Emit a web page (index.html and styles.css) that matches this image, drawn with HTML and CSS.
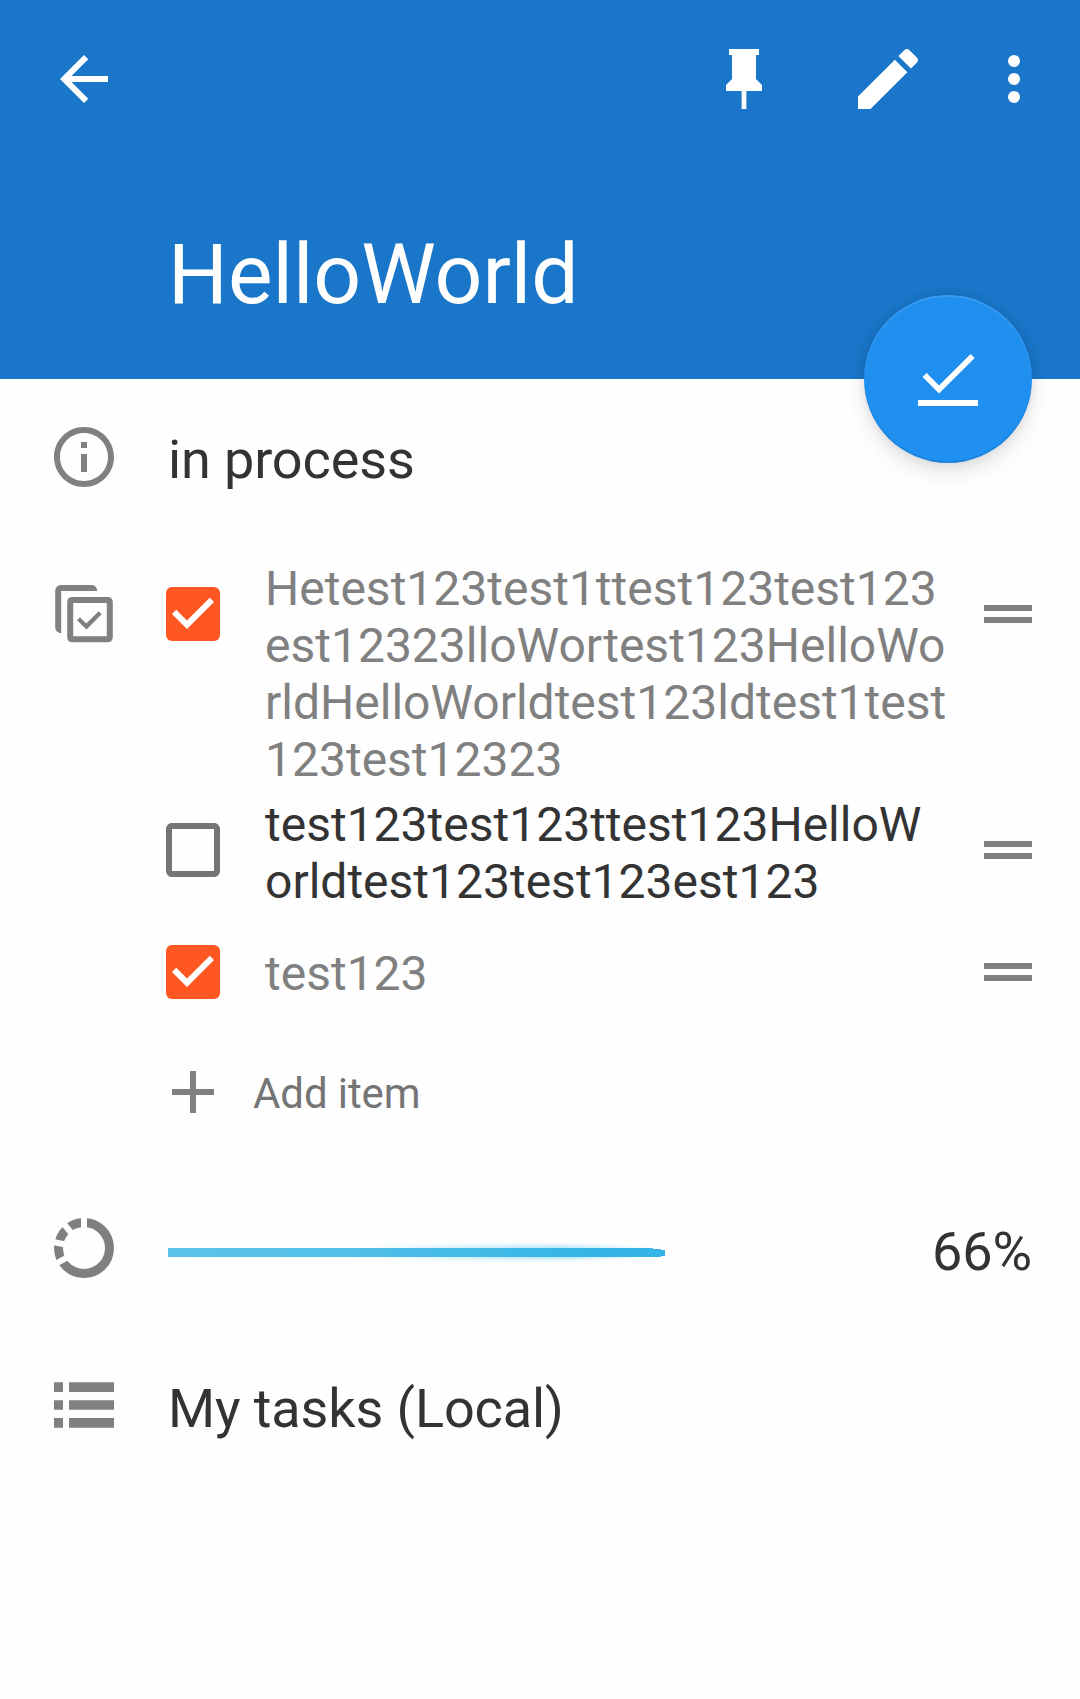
FILE: index.html
```html
<!DOCTYPE html>
<html lang="en">
<head>
<meta charset="utf-8">
<title>HelloWorld</title>
<link rel="stylesheet" href="styles.css">
</head>
<body>
<header class="header">
  <nav class="toolbar">
    <svg class="icon" viewBox="0 0 24 24"><path d="M20 11H7.83l5.59-5.59L12 4l-8 8 8 8 1.41-1.41L7.83 13H20z"/></svg>
    <div class="actions">
      <svg class="icon" viewBox="0 0 24 24"><path d="M16 12V4h1V2H7v2h1v8l-2 2v2h5.2v6h1.6v-6H18v-2z"/></svg>
      <svg class="icon icon-edit" viewBox="0 0 24 24"><path d="M3 17.25V21h3.75L17.81 9.94l-3.75-3.75zM20.71 7.04c.39-.39.39-1.02 0-1.41l-2.34-2.34c-.39-.39-1.02-.39-1.41 0l-1.83 1.83 3.75 3.75z"/></svg>
      <svg class="icon" viewBox="0 0 24 24"><circle cx="12" cy="6" r="2"/><circle cx="12" cy="12" r="2"/><circle cx="12" cy="18" r="2"/></svg>
    </div>
  </nav>
  <h1 class="title">HelloWorld</h1>
  <button class="fab" aria-label="Complete">
    <svg class="icon" viewBox="0 0 24 24"><path d="M19.55 3.67 9 14.2 4.87 10 3.53 11.33 9 16.87 20.9 5zM2 19h20v2H2z"/></svg>
  </button>
</header>
<main>
  <section class="row status">
    <svg class="icon" viewBox="0 0 24 24"><path d="M11 17h2v-6h-2zm1-15C6.48 2 2 6.48 2 12s4.48 10 10 10 10-4.48 10-10S17.52 2 12 2zm0 18c-4.41 0-8-3.59-8-8s3.59-8 8-8 8 3.59 8 8-3.59 8-8 8zM11 9h2V7h-2z"/></svg>
    <p class="text">in process</p>
  </section>
  <section class="row checklist">
    <svg class="icon" viewBox="0 0 24 24"><path d="M4.400 18.350C3.300 18.350 2.400 17.500 2.400 16.400V4.300C2.400 3.200 3.300 2.330 4.400 2.330H14.500C15.600 2.330 16.400 3.200 16.400 4.330H4.400z"/><path class="outline" d="M8.200 7.350h11.600q.8 0 .8.8v11.500q0 .8-.8.8H8.200q-.8 0-.8-.8V8.150q0-.8.8-.8z"/><path d="m10.650 13.650 2.100 2.100 4.100-4.100 1.050 1.050-5.050 5.050-3.200-3.100z" transform="translate(0 -.6)"/></svg>
    <ul class="items">
      <li class="item done">
        <svg class="icon" viewBox="0 0 24 24"><rect class="box" x="3" y="3" width="18" height="18" rx="2"/><path class="tick" d="m10 17-5-5 1.410-1.410L10 14.170l7.590-7.590L19 8z"/></svg>
        <p class="label">Hetest123test1ttest123test123<br>est12323lloWortest123HelloWo<br>rldHelloWorldtest123ldtest1test<br>123test12323</p>
        <span class="handle"></span>
      </li>
      <li class="item">
        <svg class="icon empty" viewBox="0 0 24 24"><path d="M19 5v14H5V5zm0-2H5c-1.100 0-2 .9-2 2v14c0 1.100.9 2 2 2h14c1.100 0 2-.9 2-2V5c0-1.100-.9-2-2-2z"/></svg>
        <p class="label">test123test123ttest123HelloW<br>orldtest123test123est123</p>
        <span class="handle"></span>
      </li>
      <li class="item done">
        <svg class="icon" viewBox="0 0 24 24"><rect class="box" x="3" y="3" width="18" height="18" rx="2"/><path class="tick" d="m10 17-5-5 1.410-1.410L10 14.170l7.590-7.590L19 8z"/></svg>
        <p class="label">test123</p>
        <span class="handle"></span>
      </li>
      <li class="add">
        <svg class="icon" viewBox="0 0 24 24"><path d="M19 13h-6v6h-2v-6H5v-2h6V5h2v6h6z"/></svg>
        <span class="add-label">Add item</span>
      </li>
    </ul>
  </section>
  <section class="row progress">
    <svg class="icon" viewBox="0 0 24 24"><circle class="ring" cx="12" cy="12" r="8.5"/><path class="gaps" d="M12 12V1M12 12 4.800 3.400M12 12 1.200 9.900M12 12 2.400 17.400"/></svg>
    <div class="track"><svg class="bar" viewBox="0 0 497 25">
      <defs>
        <linearGradient id="fill"><stop offset="0" stop-color="#5bc3ea"/><stop offset=".3" stop-color="#55c0e9"/><stop offset=".85" stop-color="#35b5e5"/><stop offset="1" stop-color="#35b5e5"/></linearGradient>
        <linearGradient id="glow"><stop offset="0" stop-color="#6fd0f5" stop-opacity="0"/><stop offset=".7" stop-color="#6fd0f5" stop-opacity=".6"/><stop offset="1" stop-color="#6fd0f5" stop-opacity=".4"/></linearGradient>
        <filter id="soft" x="-5%" y="-100%" width="110%" height="300%"><feGaussianBlur stdDeviation="2"/></filter>
      </defs>
      <path d="M180 7C300 5 430 4 485 11V14C430 21 300 20 180 18z" fill="url(#glow)" filter="url(#soft)"/>
      <path d="M0 8H485V9H493V10H497V16H493V17H0z" fill="url(#fill)"/>
    </svg></div>
    <span class="text">66%</span>
  </section>
  <section class="row list">
    <svg class="icon" viewBox="0 0 24 24"><path d="M2 4.430h3v3.200H2zM7 4.430h15v3.200H7zM2 10.400h3v3.200H2zM7 10.400h15v3.200H7zM2 16.370h3v3.200H2zM7 16.370h15v3.200H7z"/></svg>
    <p class="text">My tasks (Local)</p>
  </section>
</main>
</body>
</html>
```
FILE: styles.css
```css
* { box-sizing: border-box; margin: 0; padding: 0; }

body {
  width: 1080px;
  min-height: 1699px;
  background: #fefefe;
  color: #333;
  font-family: Roboto, sans-serif;
}

.icon { display: block; flex: none; width: 72px; height: 72px; fill: #808080; }

.header {
  position: relative;
  height: 379px;
  padding: 39px 30px 0 48px;
  background: #1976c8;
}
.header .icon { fill: #fff; }
.toolbar { display: flex; justify-content: space-between; align-items: center; height: 80px; }
.actions { display: flex; align-items: center; }
.actions .icon-edit { width: 80px; height: 80px; margin: 0 50px 0 68px; }
.title {
  margin: 107px 0 0 120px;
  color: #fff;
  font-size: 84px;
  font-weight: 400;
  line-height: 98px;
}
.fab {
  position: absolute;
  right: 48px;
  bottom: -84px;
  display: grid;
  place-items: center;
  width: 168px;
  height: 168px;
  border: 0;
  border-radius: 50%;
  background: #1f8ff0;
  box-shadow: 0 9px 20px rgba(0, 0, 0, .11), 0 0 10px rgba(0, 0, 0, .08),
    inset 0 2px 1px rgba(255, 255, 255, .12), inset 0 -2px 1px rgba(0, 0, 0, .08);
}

.row { display: flex; align-items: flex-start; padding: 0 48px; }
.text { font-size: 54px; letter-spacing: -.12px; line-height: 64px; }
.row > .text { margin-left: 48px; }

.status { margin-top: 42px; }
.status .text { margin-top: 7px; }

.checklist { margin-top: 62px; }
.checklist > .icon { margin-top: 23px; }
.outline { fill: none; stroke: #808080; stroke-width: 2; }
.items { flex: 1; margin-left: 37px; list-style: none; }
.item { display: flex; align-items: flex-start; padding: 5px 0 3px; }
.item .icon { margin-top: 18px; }
.label {
  flex: 1;
  min-height: 114px;
  margin-left: 36px;
  font-size: 48px;
  line-height: 57px;
  white-space: nowrap;
}
.done .label { color: #808080; }
.item:nth-child(3) .label { padding-top: 27px; }
.box { fill: #ff5722; }
.tick { fill: #fff; }
.empty { fill: #757575; }
.handle {
  width: 48px;
  height: 18px;
  margin-top: 45px;
  border: solid #808080;
  border-width: 6px 0;
}
.add { display: flex; align-items: center; height: 114px; }
.add-label {
  margin-left: 24px;
  padding-top: 4px;
  color: #757575;
  font-size: 42px;
  letter-spacing: -.1px;
  line-height: 50px;
}

.progress { margin-top: 63px; }
.ring { fill: none; stroke: #808080; stroke-width: 3; }
.gaps { fill: none; stroke: #fefefe; stroke-width: 2; }
.track { flex: 1; margin: 28px 0 0 48px; }
.bar { display: block; width: 497px; height: 25px; overflow: visible; }
.progress .text { margin: 8px 0 0; }

.list { margin-top: 85px; }
.list .text { margin-top: 8px; }
```
